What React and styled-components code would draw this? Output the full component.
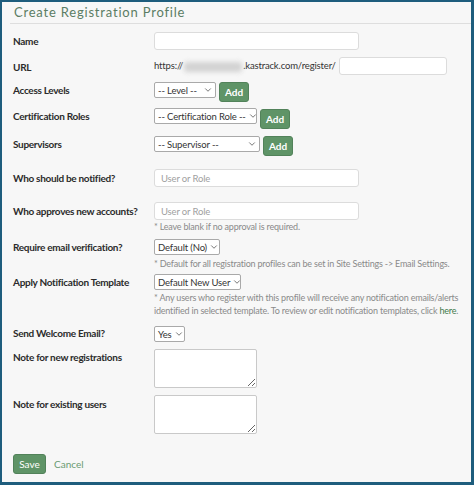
import React from "react";
import styled, { createGlobalStyle } from "styled-components";
import { ChevronDown } from "lucide-react";

const GlobalStyle = createGlobalStyle`
  html, body {
    margin: 0;
    padding: 0;
    background: #ffffff;
  }
  * {
    box-sizing: border-box;
  }
`;

const Frame = styled.div`
  width: 474px;
  height: 485px;
  border: 2px solid #1e5d7d;
  border-right-width: 3px;
  border-bottom-width: 3px;
  background: #f7f7f7;
  font-family: "Lato", "Open Sans", sans-serif;
  color: #333;
  overflow: hidden;
`;

const Header = styled.div`
  height: 22px;
  margin: 0 0 0 8px;
  padding: 2px 0 0 4px;
  border-bottom: 1px solid #dedede;
`;

const Title = styled.h1`
  margin: 0;
  font-size: 13px;
  font-weight: 400;
  letter-spacing: 0.8px;
  color: #5b7d64;
  line-height: 16px;
`;

const Form = styled.div`
  padding: 8px 0 0 11px;
`;

const Row = styled.div`
  display: grid;
  grid-template-columns: 141px 1fr;
  align-items: start;
  margin-top: ${(p) => p.$space ?? 7}px;
`;

const Label = styled.div`
  font-size: 10px;
  font-weight: 700;
  letter-spacing: -0.3px;
  color: #2b2b2b;
  padding-top: ${(p) => p.$top ?? 2}px;
  line-height: 12px;
`;

const Control = styled.div`
  display: flex;
  align-items: ${(p) => p.$align || "center"};
  gap: 3px;
`;

const Stack = styled.div`
  display: flex;
  flex-direction: column;
`;

const TextInput = styled.div`
  width: ${(p) => p.$w || 205}px;
  height: 18px;
  background: #fff;
  border: 1px solid #dcdcdc;
  border-radius: 3px;
  font-size: 9.5px;
  letter-spacing: -0.15px;
  color: #a0a0a0;
  padding: 0 6px;
  display: flex;
  align-items: center;
`;

const Select = styled.div`
  display: inline-flex;
  align-items: center;
  justify-content: space-between;
  width: ${(p) => p.$w}px;
  height: 16px;
  background: #fff;
  border: 1px solid #a9a9a9;
  border-radius: 2px;
  padding: 0 2px 0 3px;
  font-size: 9.5px;
  letter-spacing: -0.15px;
  color: #333;
  white-space: nowrap;
  overflow: hidden;
  svg {
    flex: none;
    margin-left: 2px;
  }
`;

const AddButton = styled.button`
  width: ${(p) => p.$w || 30}px;
  height: 20px;
  margin-top: ${(p) => p.$drop || 0}px;
  padding: 0;
  border: 1px solid #52825a;
  border-radius: 3px;
  background: #5f9467;
  color: #fff;
  font-family: inherit;
  font-size: 10px;
  font-weight: 700;
`;

const UrlText = styled.span`
  font-size: 9.5px;
  letter-spacing: -0.15px;
  color: #333;
  white-space: nowrap;
`;

const Blurred = styled.span`
  display: inline-block;
  width: 58px;
  height: 10px;
  margin: 0 1px;
  background: #d2d2d2;
  border-radius: 3px;
  filter: blur(2.5px);
  vertical-align: middle;
`;

const Hint = styled.div`
  font-size: 9px;
  letter-spacing: -0.2px;
  color: #8a8a8a;
  line-height: 13px;
  margin-top: ${(p) => p.$top ?? 2}px;
  a {
    color: #3f7a4b;
    text-decoration: none;
  }
`;

const Area = styled.textarea`
  width: 103px;
  height: 39px;
  background: #fff;
  border: 1px solid #c9c9c9;
  border-radius: 2px;
  margin: 0;
  display: block;
`;

const Actions = styled.div`
  display: flex;
  align-items: center;
  gap: 8px;
  margin-top: 20px;
`;

const SaveButton = styled.button`
  width: 33px;
  height: 20px;
  padding: 0;
  border: 1px solid #52825a;
  border-radius: 3px;
  background: #5f9467;
  color: #fff;
  font-family: inherit;
  font-size: 10px;
`;

const CancelLink = styled.a`
  font-size: 10px;
  color: #6a9a72;
  text-decoration: none;
`;

function Dropdown({ w, children }) {
  return (
    <Select $w={w}>
      <span>{children}</span>
      <ChevronDown size={10} strokeWidth={1.6} color="#333" />
    </Select>
  );
}

export default function App() {
  return (
    <Frame>
      <GlobalStyle />
      <Header>
        <Title>Create Registration Profile</Title>
      </Header>
      <Form>
        <Row $space={0}>
          <Label $top={3}>Name</Label>
          <Control>
            <TextInput $w={205} />
          </Control>
        </Row>
        <Row $space={7}>
          <Label $top={4}>URL</Label>
          <Control>
            <UrlText>
              https://<Blurred />.kastrack.com/register/
            </UrlText>
            <TextInput $w={108} />
          </Control>
        </Row>
        <Row $space={7}>
          <Label $top={2}>Access Levels</Label>
          <Control $align="flex-start">
            <Dropdown w={62}>-- Level --</Dropdown>
            <AddButton>Add</AddButton>
          </Control>
        </Row>
        <Row $space={6}>
          <Label $top={2}>Certification Roles</Label>
          <Control $align="flex-start">
            <Dropdown w={103}>-- Certification Role --</Dropdown>
            <AddButton $drop={1}>Add</AddButton>
          </Control>
        </Row>
        <Row $space={7}>
          <Label $top={2}>Supervisors</Label>
          <Control $align="flex-start">
            <Dropdown w={106}>-- Supervisor --</Dropdown>
            <AddButton>Add</AddButton>
          </Control>
        </Row>
        <Row $space={13}>
          <Label $top={3}>Who should be notified?</Label>
          <Control>
            <TextInput $w={205}>User or Role</TextInput>
          </Control>
        </Row>
        <Row $space={15}>
          <Label $top={3}>Who approves new accounts?</Label>
          <Stack>
            <TextInput $w={205}>User or Role</TextInput>
            <Hint $top={0}>* Leave blank if no approval is required.</Hint>
          </Stack>
        </Row>
        <Row $space={6}>
          <Label $top={2}>Require email verification?</Label>
          <Stack>
            <Control>
              <Dropdown w={66}>Default (No)</Dropdown>
            </Control>
            <Hint $top={2}>
              * Default for all registration profiles can be set in Site Settings -&gt; Email Settings.
            </Hint>
          </Stack>
        </Row>
        <Row $space={4}>
          <Label $top={2}>Apply Notification Template</Label>
          <Stack>
            <Control>
              <Dropdown w={87}>Default New User</Dropdown>
            </Control>
            <Hint $top={1}>
              * Any users who register with this profile will receive any notification emails/alerts
              identified in selected template. To review or edit notification templates, click{" "}
              <a href="#">here</a>.
            </Hint>
          </Stack>
        </Row>
        <Row $space={9}>
          <Label $top={1}>Send Welcome Email?</Label>
          <Control>
            <Dropdown w={31}>Yes</Dropdown>
          </Control>
        </Row>
        <Row $space={7}>
          <Label $top={2}>Note for new registrations</Label>
          <Control>
            <Area />
          </Control>
        </Row>
        <Row $space={7}>
          <Label $top={3}>Note for existing users</Label>
          <Control>
            <Area />
          </Control>
        </Row>
        <Actions>
          <SaveButton>Save</SaveButton>
          <CancelLink href="#">Cancel</CancelLink>
        </Actions>
      </Form>
    </Frame>
  );
}
